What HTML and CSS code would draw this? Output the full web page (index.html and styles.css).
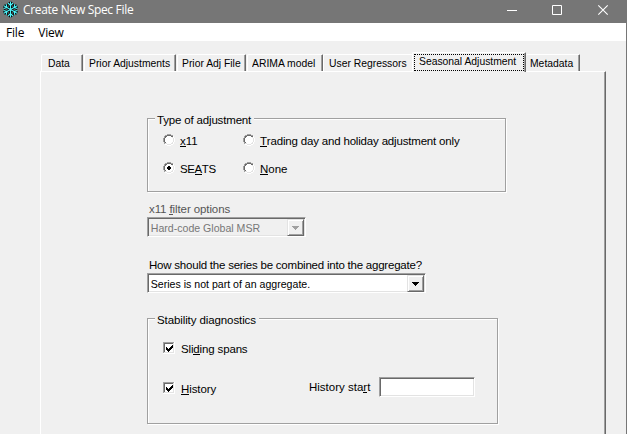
FILE: index.html
```html
<!DOCTYPE html>
<html lang="en">
<head>
<meta charset="utf-8">
<title>Create New Spec File</title>
<link rel="stylesheet" href="styles.css">
</head>
<body>
<div class="window">
  <header class="titlebar">
    <svg class="logo" width="17" height="17" viewBox="0 0 17 17">
      <defs><g id="flake" fill="none"><path id="arm" d="M8.500.8v7.700M6 2l2.500 2.500L11 2"/><use href="#arm" transform="rotate(60 8.500 8.500)"/><use href="#arm" transform="rotate(120 8.500 8.500)"/><use href="#arm" transform="rotate(180 8.500 8.500)"/><use href="#arm" transform="rotate(240 8.500 8.500)"/><use href="#arm" transform="rotate(300 8.500 8.500)"/></g></defs>
      <use href="#flake" stroke="#000" stroke-width="2.8"/><use href="#flake" stroke="#4cf4fa" stroke-width="1.1"/>
    </svg>
    <h1 class="title">Create New Spec File</h1>
    <div class="controls">
      <svg width="103" height="23" viewBox="0 0 103 23" fill="none" stroke="#fff"><path d="M0 10.500h10M45.500 5.500h9v9h-9z"/><path d="M91.300 5.300l9.400 9.400M100.700 5.300l-9.400 9.400" stroke-width="1.100"/></svg>
    </div>
  </header>
  <nav class="menu"><span class="file">File</span><span class="view">View</span></nav>
  <div class="tabs">
    <div class="tab t1"><span>Data</span></div>
    <div class="tab t2"><span>Prior Adjustments</span></div>
    <div class="tab t3"><span>Prior Adj File</span></div>
    <div class="tab t4"><span>ARIMA model</span></div>
    <div class="tab t5"><span>User Regressors</span></div>
    <div class="tab t6 selected"><div class="focus"><span>Seasonal Adjustment</span></div></div>
    <div class="tab t7"><span>Metadata</span></div>
  </div>
  <main class="panel">
    <section class="group adjustment">
      <h2 class="legend"><span class="s-type">Type of adjustment</span></h2>
      <div class="radios">
        <label class="option"><svg class="radio"><use href="#radio"/></svg><span class="s-x11"><u>x</u>11</span></label>
        <label class="option"><svg class="radio"><use href="#radio"/></svg><span class="s-trading"><u>T</u>rading day and holiday adjustment only</span></label>
        <label class="option"><svg class="radio"><use href="#radio"/><path d="M5 4h2v1h1v2H7v1H5V7H4V5h1z"/></svg><span class="s-seats">SE<u>A</u>TS</span></label>
        <label class="option"><svg class="radio"><use href="#radio"/></svg><span class="s-none"><u>N</u>one</span></label>
      </div>
    </section>
    <div class="field filter disabled">
      <label class="caption"><span class="s-filter">x11 <u>f</u>ilter options</span></label>
      <div class="combo"><span class="value s-hard">Hard-code Global MSR</span><div class="drop"><svg width="7" height="4"><path d="M0 0h7v1H6v1H5v1H4v1H3V3H2V2H1V1H0z"/></svg></div></div>
    </div>
    <div class="field aggregate">
      <label class="caption"><span class="s-how">How should the series be combined into the aggregate?</span></label>
      <div class="combo"><span class="value s-series">Series is not part of an aggregate.</span><div class="drop"><svg width="7" height="4"><path d="M0 0h7v1H6v1H5v1H4v1H3V3H2V2H1V1H0z"/></svg></div></div>
    </div>
    <section class="group stability">
      <h2 class="legend"><span class="s-stab">Stability diagnostics</span></h2>
      <label class="checkline"><svg class="check"><use href="#check"/></svg><span class="s-slide">Sli<u>d</u>ing spans</span></label>
      <div class="history">
        <label class="checkline"><svg class="check"><use href="#check"/></svg><span class="s-hist"><u>H</u>istory</span></label>
        <label class="start"><span class="s-start">History sta<u>r</u>t</span></label>
        <div class="input"></div>
      </div>
    </section>
  </main>
</div>
<svg class="defs" width="0" height="0">
  <defs>
    <g id="radio" shape-rendering="crispEdges"><path fill="#fff" d="M4 0h4v1h2v1h1v2h1v4h-1v2h-1v1H8v1H4v-1H2v-1H1V8H0V4h1V2h1V1h2z"/><path fill="#a0a0a0" d="M4 0h4v1H4zM2 1h2v1H2zM8 1h2v1H8zM1 2h1v2H1zM0 4h1v4H0zM1 8h1v2H1z"/><path fill="#696969" d="M4 1h4v1H4zM2 2h2v1H2zM8 2h2v1H8zM2 3h1v1H2zM1 4h1v4H1zM2 8h1v1H2z"/><path fill="#e3e3e3" d="M10 3h-1v1h1v4H9v1H8v1H4V9H2v1h2v1h4v-1h2V8h1V4h-1z"/></g>
    <g id="check" shape-rendering="crispEdges"><path fill="#fff" d="M0 0h12v12H0z"/><path fill="#a0a0a0" d="M0 0h11v1H1v10H0z"/><path fill="#696969" d="M1 1h9v1H2v8H1z"/><path fill="#e3e3e3" d="M10 1h1v10H1v-1h9z"/><path d="M3 5h1v1h1v1h1V6h1V5h1V4h1V3h1v3H9v1H8v1H7v1H6v1H5V9H4V8H3z"/></g>
  </defs>
</svg>
</body>
</html>
```
FILE: styles.css
```css
* { box-sizing: border-box; }
body { margin: 0; overflow: hidden; background: #f0f0f0; color: #000; font: 11.5px/14px "Liberation Sans", sans-serif; }
svg { display: block; flex: none; }
.defs { position: absolute; }
.window { width: 627px; height: 434px; border-right: 1px solid #767676; overflow: hidden; }
span { white-space: nowrap; }
h1, h2 { margin: 0; font-weight: normal; }
u { text-decoration: none; display: inline-block; height: 13px; border-bottom: 1px solid currentColor; vertical-align: top; line-height: 14px; }

.titlebar { display: flex; height: 23px; background: #767676; padding-left: 2px; width: 627px; }
.logo { margin-top: 1px; }
.title { flex: 1; margin-left: 4px; color: #fff; font: 12px/20px "Open Sans", sans-serif; letter-spacing: -.32px; }
.controls { width: 120px; }
.menu { display: flex; gap: 14px; height: 18px; padding-left: 6px; background: #fff; font: 12px/20px "Open Sans", sans-serif; letter-spacing: -.2px; }

.tabs { display: flex; align-items: flex-end; height: 30px; padding-left: 41px; }
.tab { height: 17px; padding: 1px 0 0 6px; border: 1px solid #fff; border-right-color: #696969; border-bottom: 0; border-radius: 2px 1px 0 0; box-shadow: inset -1px 0 #a0a0a0; }
.tab span { display: inline-block; transform: scaleX(.9); transform-origin: left; }
.t1 { width: 42px; }
.t2 { width: 92px; margin-left: 1px; padding-left: 4px; }
.t3 { width: 69px; margin-left: 1px; padding-left: 4px; }
.t4 { width: 76px; margin-left: 1px; padding-left: 4px; }
.t5 { width: 89px; padding-left: 5px; border-right: 0; box-shadow: none; }
.t7 { width: 54px; padding-left: 4px; border-left: 0; }
.tab.selected { width: 114px; height: 20px; padding: 1px; margin-bottom: -1px; background: #f0f0f0; z-index: 1; }
.focus { height: 17px; border: 1px dotted #000; padding-left: 4px; line-height: 12px; }

.panel { width: 566px; height: 370px; margin-left: 40px; padding: 47px 0 0 106px; border: 1px solid #fff; border-right-color: #696969; box-shadow: inset -1px 0 #a0a0a0; }
.group { border: 1px solid #a0a0a0; box-shadow: 1px 1px #fff, inset 1px 1px #fff; }
.adjustment { width: 359px; height: 74px; margin-top: -1px; }
.legend { font-size: inherit; width: max-content; height: 14px; margin: -6px 0 0 7px; padding: 0 3px 0 2px; background: #f0f0f0; }
.radios { display: grid; grid-template: 28px 28px / 80px auto; padding: 6px 0 0 15px; }
.option { display: flex; gap: 5px; }
.option span { margin-top: 1px; }
.radio { width: 12px; height: 12px; margin-top: 1px; }
.filter { margin-top: 10px; }
.caption { display: block; height: 15px; padding-left: 2px; }
.combo { display: flex; justify-content: space-between; height: 20px; background: #fff; border: 1px solid; border-color: #a0a0a0 #fff #fff #a0a0a0; box-shadow: inset 1px 1px #696969, inset -1px -1px #e3e3e3; }
.value { padding: 3px 0 0 3px; transform: scaleX(.92); transform-origin: left; }
.filter .combo { width: 159px; }
.drop { width: 17px; height: 17px; margin: 1px 1px 0 0; display: flex; align-items: center; justify-content: center; background: #f0f0f0; border: 1px solid; border-color: #e3e3e3 #696969 #696969 #e3e3e3; box-shadow: inset 1px 1px #fff, inset -1px -1px #a0a0a0; }
.disabled { color: #555; }
.disabled .combo { background: #f0f0f0; color: #777; }
.disabled .drop svg { fill: #a0a0a0; }
.aggregate { margin-top: 21px; }
.aggregate .combo { width: 279px; }
.stability { width: 351px; height: 106px; margin-top: 25px; }
.checkline { display: flex; gap: 6px; height: 14px; }
.check { width: 12px; height: 12px; }
.stability .checkline { margin: 15px 0 0 15px; }
.history { display: flex; margin-top: 21px; height: 20px; }
.history .checkline { width: 146px; margin: 5px 0 0 15px; }
.start { width: 70px; margin-top: 3px; }
.input { width: 96px; height: 20px; background: #fff; border: 1px solid; border-color: #a0a0a0 #fff #fff #a0a0a0; box-shadow: inset 1px 1px #696969, inset -1px -1px #e3e3e3; }

.s-type { letter-spacing: -.17px; }
.s-trading { letter-spacing: -.18px; }
.s-seats { letter-spacing: -.4px; }
.s-filter, .s-stab, .s-hist { letter-spacing: -.1px; }
.s-how { letter-spacing: -.22px; }
.s-slide { letter-spacing: -.15px; }
```
